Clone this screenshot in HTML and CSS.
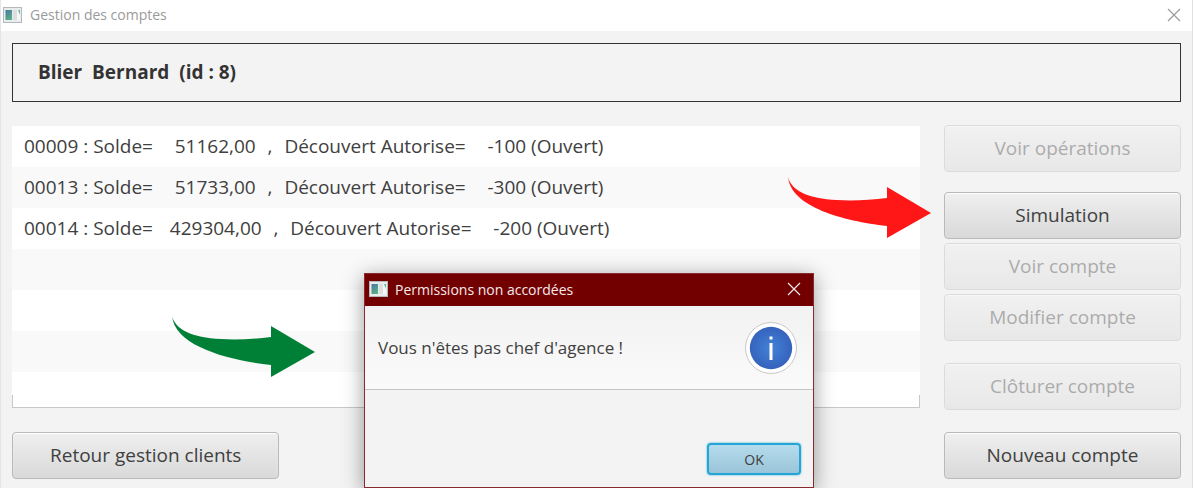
FILE: index.html
```html
<!DOCTYPE html>
<html lang="fr">
<head>
<meta charset="utf-8">
<title>Gestion des comptes</title>
<link rel="stylesheet" href="styles.css">
</head>
<body>
<svg class="defs" aria-hidden="true">
  <defs>
    <linearGradient id="pane" x1="0" y1="0" x2="0.6" y2="1">
      <stop offset="0" stop-color="#4878a4"/>
      <stop offset="1" stop-color="#5cae84"/>
    </linearGradient>
    <symbol id="app-icon" viewBox="0 0 19 16">
      <rect x="0.5" y="0.5" width="18" height="15" fill="#e9ecec" stroke="#b4babc"/>
      <rect x="2.5" y="3" width="6.5" height="10" fill="url(#pane)"/>
      <rect x="10" y="3" width="4" height="10" fill="#dcdfe0"/>
      <rect x="14" y="3" width="3" height="10" fill="#f6f7f7"/>
      <path d="M15 3h2v5z" fill="#6fb39b"/>
    </symbol>
    <symbol id="arrow" viewBox="0 0 143 62">
      <path d="M0 0C3 13 20 22 49 23C65 24 82 23 99 21V10L143 36L99 61V49C55 44 3 30 0 0Z" fill="currentColor"/>
    </symbol>
    <symbol id="cross" viewBox="0 0 14 14">
      <path d="M1 1L13 13M13 1L1 13" fill="none" stroke="currentColor" stroke-width="1.2"/>
    </symbol>
  </defs>
</svg>

<main class="window">
  <header class="titlebar">
    <svg class="app-icon" aria-hidden="true"><use href="#app-icon"/></svg>
    <h1 class="title">Gestion des comptes</h1>
    <button class="close" type="button" aria-label="Fermer"><svg class="cross" aria-hidden="true"><use href="#cross"/></svg></button>
  </header>
  <div class="content">
    <h2 class="client">Blier  Bernard  (id : 8)</h2>
    <div class="columns">
      <div class="left">
        <ul class="accounts">
          <li class="account"><span>00009 : Solde=    </span><span>51162,00  </span><span>,  </span><span>Découvert Autorise=    </span><span>-100 (Ouvert)</span></li>
          <li class="account"><span>00013 : Solde=    </span><span>51733,00  </span><span>,  </span><span>Découvert Autorise=    </span><span>-300 (Ouvert)</span></li>
          <li class="account"><span>00014 : Solde=   </span><span>429304,00  </span><span>,  </span><span>Découvert Autorise=    </span><span>-200 (Ouvert)</span></li>
          <li class="account"></li>
          <li class="account"></li>
          <li class="account"></li>
          <li class="account account-cut"></li>
        </ul>
        <button class="btn back" type="button">Retour gestion clients</button>
      </div>
      <div class="actions">
        <button class="btn" type="button" disabled>Voir opérations</button>
        <div class="group">
          <button class="btn" type="button">Simulation</button>
          <button class="btn" type="button" disabled>Voir compte</button>
          <button class="btn" type="button" disabled>Modifier compte</button>
        </div>
        <button class="btn" type="button" disabled>Clôturer compte</button>
        <button class="btn" type="button">Nouveau compte</button>
      </div>
    </div>
  </div>
</main>

<svg class="arrow arrow-red" aria-hidden="true"><use href="#arrow"/></svg>
<svg class="arrow arrow-green" aria-hidden="true"><use href="#arrow"/></svg>

<section class="dialog" role="dialog" aria-labelledby="dialog-title">
  <header class="dialog-titlebar">
    <svg class="app-icon" aria-hidden="true"><use href="#app-icon"/></svg>
    <h2 class="dialog-title" id="dialog-title">Permissions non accordées</h2>
    <button class="close" type="button" aria-label="Fermer"><svg class="cross" aria-hidden="true"><use href="#cross"/></svg></button>
  </header>
  <div class="dialog-header">
    <p class="message">Vous n'êtes pas chef d'agence !</p>
    <svg class="info" viewBox="0 0 54 54" aria-hidden="true">
      <defs>
        <radialGradient id="blue">
          <stop offset="0" stop-color="#4283d6"/>
          <stop offset="1" stop-color="#3662bd"/>
        </radialGradient>
      </defs>
      <circle cx="27" cy="27" r="25.5" fill="#fff" stroke="#c8c8c8"/>
      <circle cx="27" cy="27" r="21.2" fill="url(#blue)"/>
      <rect x="25.5" y="15.5" width="3" height="3" fill="#fff"/>
      <rect x="25.5" y="22" width="3" height="17" fill="#fff"/>
    </svg>
  </div>
  <div class="dialog-buttons">
    <button class="ok" type="button">OK</button>
  </div>
</section>
</body>
</html>
```

FILE: styles.css
```css
* {
  box-sizing: border-box;
}

body {
  margin: 0;
  min-height: 100vh;
  overflow: hidden;
  position: relative;
  background: #f3f3f3;
  color: #404040;
  font-family: "Open Sans", "Noto Sans", sans-serif;
  font-size: 19px;
}

h1, h2, p, ul {
  margin: 0;
  padding: 0;
  font-weight: 400;
}

button {
  font-family: inherit;
  color: inherit;
}

.defs {
  position: absolute;
  width: 0;
  height: 0;
}

.window {
  min-height: 100vh;
  border-left: 1px solid #e4e4ea;
  border-right: 1px solid #e0e0e0;
}

.titlebar {
  display: flex;
  align-items: center;
  height: 31px;
  padding: 0 11px 2px 2px;
  background: #fff;
  color: #9a9a9a;
}

.app-icon {
  width: 19px;
  height: 16px;
}

.title {
  flex: 1;
  margin-left: 8px;
  font-size: 14px;
}

.close {
  display: flex;
  padding: 0;
  border: 0;
  background: none;
}

.cross {
  width: 14px;
  height: 14px;
}

.content {
  padding: 12px 11px 8px;
}

.client {
  padding: 0 25px;
  border: 1px solid #333;
  color: #333;
  font-size: 19px;
  font-weight: 700;
  line-height: 57px;
  white-space: pre;
}

.columns {
  display: grid;
  grid-template-columns: 1fr 237px;
  gap: 24px;
  margin-top: 23px;
}

.left {
  display: flex;
  flex-direction: column;
  justify-content: space-between;
  align-items: flex-start;
}

.accounts {
  width: 100%;
  margin-top: 1px;
  padding-bottom: 12px;
  border: 1px solid #c8c8c8;
  border-top: 0;
  background: #fff;
  list-style: none;
}

.account {
  display: flex;
  gap: 2px;
  height: 41px;
  margin: 0 -1px;
  padding-left: 12px;
  background: #fff;
  line-height: 41px;
  white-space: pre;
}

.account:nth-child(even) {
  background: #f9f9f9;
}

.account-cut {
  height: 23px;
}

.btn {
  height: 47px;
  padding: 0 37px 2px;
  border: 1px solid #b9b9b9;
  border-radius: 4px;
  background: linear-gradient(#efefef, #d9d9d9);
  box-shadow: inset 0 1px 1px #fff;
  font-size: 19px;
}

.btn:disabled {
  opacity: 0.4;
  color: inherit;
}

.actions {
  display: flex;
  flex-direction: column;
  gap: 22px;
}

.actions .btn {
  padding: 0 0 2px;
}

.group {
  display: flex;
  flex-direction: column;
  gap: 4px;
  margin-top: -2px;
}

.arrow {
  position: absolute;
  width: 143px;
  height: 62px;
}

.arrow-red {
  left: 788px;
  top: 177px;
  color: #ff1616;
}

.arrow-green {
  left: 172px;
  top: 316px;
  color: #008037;
}

.dialog {
  position: absolute;
  left: 364px;
  top: 273px;
  width: 450px;
  border: 1px solid #8a2a2e;
  background: #f3f3f3;
  box-shadow: 0 4px 20px rgba(0, 0, 0, 0.4);
}

.dialog-titlebar {
  display: flex;
  align-items: center;
  height: 32px;
  padding: 0 12px 2px 4px;
  background: #730000;
  color: #f4eaea;
}

.dialog-title {
  flex: 1;
  margin-left: 7px;
  font-size: 14px;
}

.dialog-header {
  display: flex;
  align-items: center;
  justify-content: space-between;
  height: 84px;
  padding: 0 15px 0 13px;
  border-bottom: 1px solid #c4c4c4;
  background: linear-gradient(#f2f2f2, #fafafa);
}

.message {
  font-size: 17px;
}

.info {
  width: 54px;
  height: 54px;
}

.dialog-buttons {
  display: flex;
  justify-content: flex-end;
  padding: 53px 12px 12px;
}

.ok {
  width: 94px;
  height: 32px;
  padding: 0;
  border: 2px solid #23a6d5;
  border-radius: 4px;
  background: linear-gradient(#b4dcec, #9bc4d9);
  box-shadow: 0 0 2px #23a6d5;
  font-size: 14px;
}
```
